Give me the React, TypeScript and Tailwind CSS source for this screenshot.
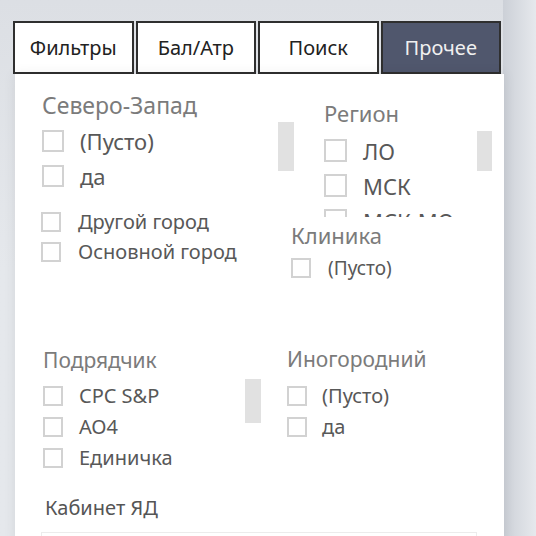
import React from 'react';

type SlicerProps = {
  title?: string;
  items: string[];
  box: number;
  gap: number;
  textSize: string;
  textGap: string;
  titleSize?: string;
  className?: string;
  listTop?: string;
};

function Checkbox({ size }: { size: number }) {
  return (
    <span
      className="shrink-0 border-2 border-[#d2d2d2] bg-white"
      style={{ width: size, height: size }}
    />
  );
}

function Slicer({ title, items, box, gap, textSize, textGap, titleSize, className, listTop }: SlicerProps) {
  return (
    <div className={className}>
      {title && (
        <div className={`${titleSize} leading-[28px] text-[#7b7b7b] whitespace-nowrap`}>{title}</div>
      )}
      <div className={`flex flex-col ${listTop ?? ''}`} style={{ gap }}>
        {items.map((item) => (
          <div key={item} className={`flex items-center ${textGap}`}>
            <Checkbox size={box} />
            <span className={`${textSize} text-[#585858] whitespace-nowrap leading-none`}>{item}</span>
          </div>
        ))}
      </div>
    </div>
  );
}

const tabs = ['Фильтры', 'Бал/Атр', 'Поиск', 'Прочее'];

export default function App() {
  return (
    <div className="relative w-[536px] h-[536px] overflow-hidden bg-gradient-to-b from-[#dcdfe4] via-[#e5e8ec] to-[#e5e8ec] font-['Noto_Sans',sans-serif]">
      {/* right edge shadow */}
      <div className="absolute right-0 top-0 h-full w-[33px] bg-gradient-to-r from-[#ccd0d7] to-[#e6e9ed]" />

      <div className="relative pt-[21px] pl-[13px]">
        {/* Tabs */}
        <div className="flex gap-[2px] w-[488px]">
          {tabs.map((t, i) => (
            <div
              key={t}
              className={`flex-1 h-[53px] flex items-center justify-center border-2 border-[#2f2f2f] text-[20px] ${
                i === 3 ? 'bg-[#50576d] text-[#f0f0f0]' : 'bg-white text-[#222]'
              }`}
            >
              {t}
            </div>
          ))}
        </div>

        {/* Panel: report canvas with slicer visuals */}
        <div className="relative ml-[2px] w-[489px] h-[470px] bg-white shadow-[0_0_12px_rgba(0,0,0,0.08)]">
          <Slicer
            title="Северо-Запад"
            titleSize="text-[23px]"
            items={['(Пусто)', 'да']}
            box={22}
            gap={13}
            textSize="text-[22px]"
            textGap="gap-[16px]"
            className="absolute left-[27px] top-[17px]"
            listTop="mt-[11px]"
          />
          <div className="absolute left-[263px] top-[48px] w-[16px] h-[49px] bg-[#e1e1e1]" />

          <Slicer
            items={['Другой город', 'Основной город']}
            box={20}
            gap={10}
            textSize="text-[20px]"
            textGap="gap-[17px]"
            className="absolute left-[26px] top-[138px]"
          />

          <div className="absolute left-[308px] top-[25px] w-[150px] h-[118px] overflow-hidden">
            <Slicer
              title="Регион"
              titleSize="text-[22px]"
              items={['ЛО', 'МСК', 'МСК-МО']}
              box={23}
              gap={12}
              textSize="text-[22px]"
              textGap="gap-[16px]"
              className="pl-[1px]"
              listTop="mt-[12px]"
            />
          </div>
          <div className="absolute left-[462px] top-[57px] w-[15px] h-[40px] bg-[#e1e1e1]" />

          <Slicer
            title="Клиника"
            titleSize="text-[22px]"
            items={['(Пусто)']}
            box={20}
            gap={10}
            textSize="text-[19px]"
            textGap="gap-[17px]"
            className="absolute left-[276px] top-[147px]"
            listTop="mt-[9px]"
          />

          <Slicer
            title="Подрядчик"
            titleSize="text-[21px]"
            items={['CPC S&P', 'АО4', 'Единичка']}
            box={20}
            gap={11}
            textSize="text-[20px]"
            textGap="gap-[16px]"
            className="absolute left-[28px] top-[272px]"
            listTop="mt-[12px]"
          />
          <div className="absolute left-[230px] top-[305px] w-[16px] h-[44px] bg-[#e1e1e1]" />

          <Slicer
            title="Иногородний"
            titleSize="text-[21px]"
            items={['(Пусто)', 'да']}
            box={20}
            gap={11}
            textSize="text-[20px]"
            textGap="gap-[15px]"
            className="absolute left-[272px] top-[271px]"
            listTop="mt-[13px]"
          />

          <div className="absolute left-[30px] top-[420px] text-[20px] leading-[28px] text-[#555]">Кабинет ЯД</div>
          <div className="absolute left-[26px] top-[458px] w-[436px] h-[40px] border border-[#ececec]" />
        </div>
      </div>
    </div>
  );
}
